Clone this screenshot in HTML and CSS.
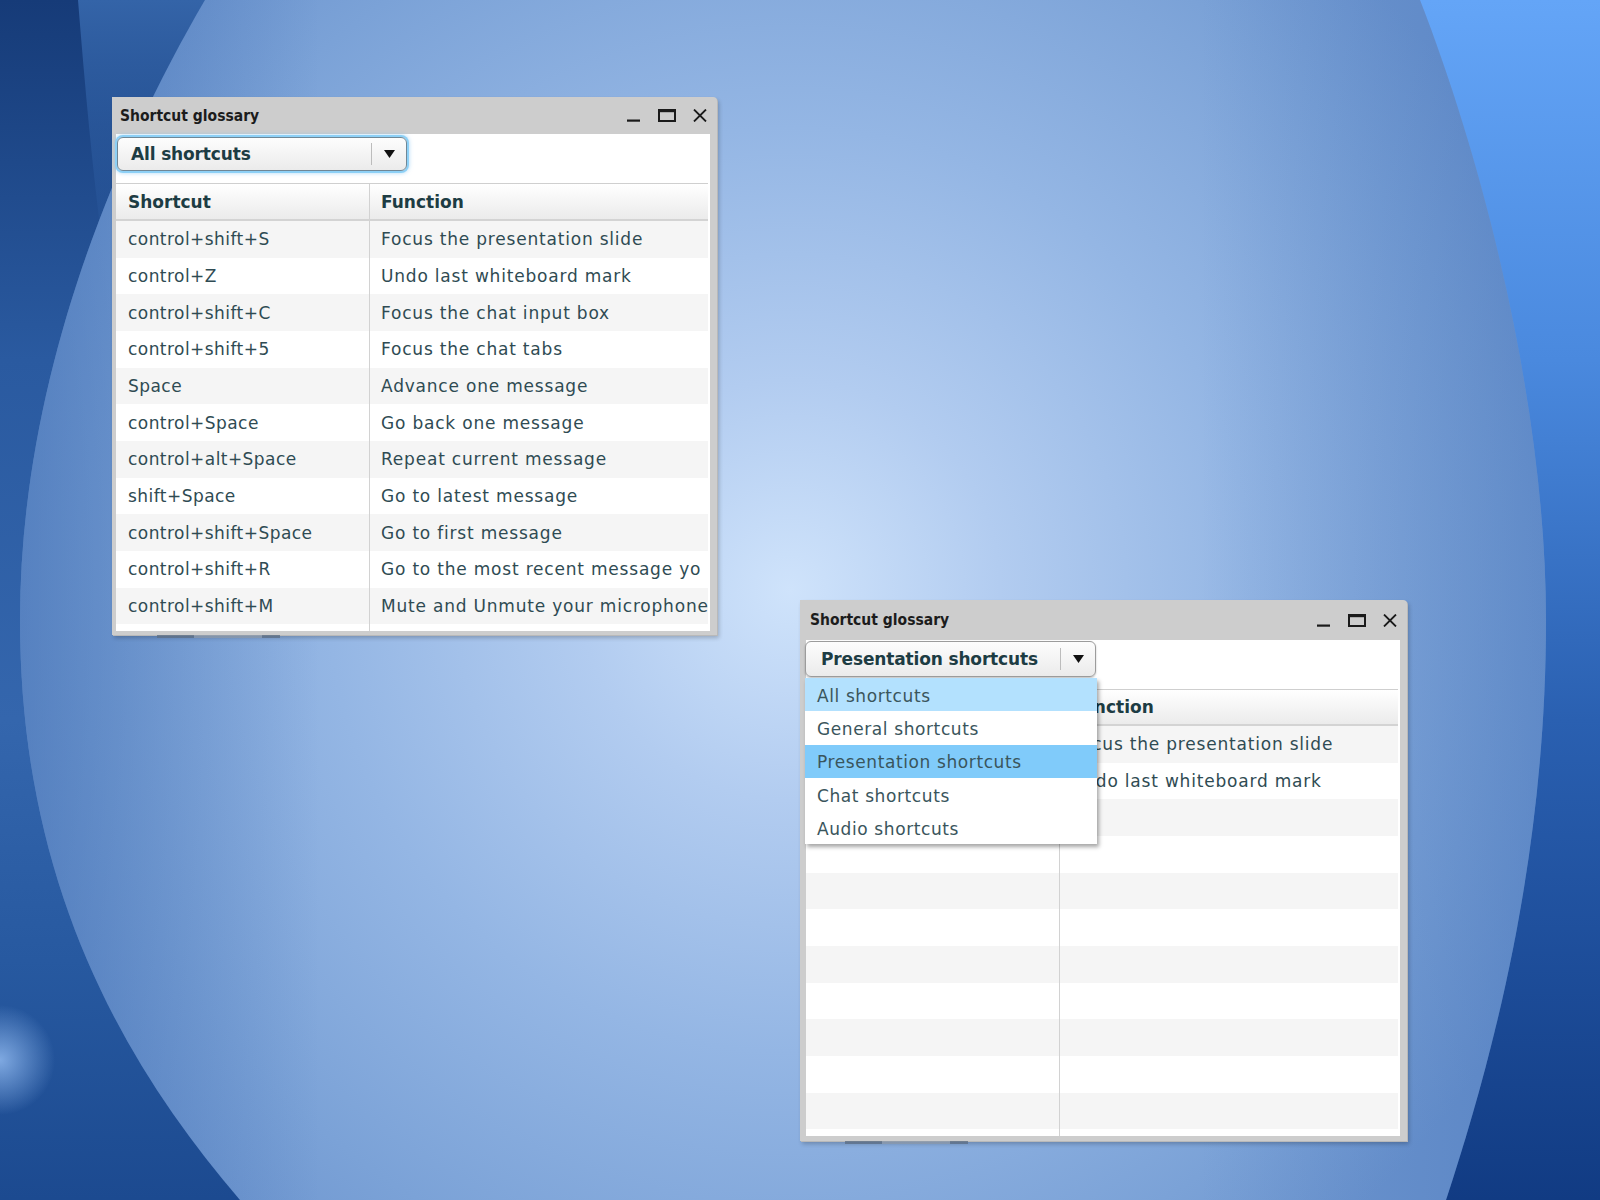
FILE: index.html
```html
<!DOCTYPE html>
<html lang="en">
<head>
<meta charset="utf-8">
<title>Shortcut glossary</title>
<link rel="stylesheet" href="styles.css">
</head>
<body>
<div class="desktop">
  <svg class="wallpaper" width="1600" height="1200" viewBox="0 0 1600 1200" aria-hidden="true">
    <defs>
      <linearGradient id="leftg" x1="0" y1="0" x2="0" y2="1">
        <stop offset="0" stop-color="#163b78"/>
        <stop offset="0.3" stop-color="#2a5aa0"/>
        <stop offset="0.6" stop-color="#3466ad"/>
        <stop offset="0.8" stop-color="#2759a0"/>
        <stop offset="1" stop-color="#1c4a90"/>
      </linearGradient>
      <linearGradient id="rightg" x1="0" y1="0" x2="0" y2="1">
        <stop offset="0" stop-color="#64a5f7"/>
        <stop offset="0.3" stop-color="#4a89de"/>
        <stop offset="0.6" stop-color="#2a60b1"/>
        <stop offset="1" stop-color="#113b83"/>
      </linearGradient>
      <radialGradient id="mid" cx="790" cy="590" r="840" gradientUnits="userSpaceOnUse">
        <stop offset="0" stop-color="#cfe3fb"/>
        <stop offset="0.25" stop-color="#b2ccf0"/>
        <stop offset="0.55" stop-color="#94b6e4"/>
        <stop offset="0.85" stop-color="#7ba2d7"/>
        <stop offset="1" stop-color="#6f97d0"/>
      </radialGradient>
      <linearGradient id="rshade" x1="1200" y1="0" x2="1550" y2="0" gradientUnits="userSpaceOnUse">
        <stop offset="0" stop-color="#3565b0" stop-opacity="0"/>
        <stop offset="1" stop-color="#3565b0" stop-opacity="0.35"/>
      </linearGradient>
      <linearGradient id="lshade" x1="320" y1="0" x2="20" y2="0" gradientUnits="userSpaceOnUse">
        <stop offset="0" stop-color="#2f5fa8" stop-opacity="0"/>
        <stop offset="1" stop-color="#2f5fa8" stop-opacity="0.45"/>
      </linearGradient>
      <linearGradient id="streak" x1="0" y1="0" x2="0" y2="1">
        <stop offset="0" stop-color="#3464a8"/>
        <stop offset="1" stop-color="#2a5aa0" stop-opacity="0"/>
      </linearGradient>
      <radialGradient id="glow" cx="0" cy="1060" r="55" gradientUnits="userSpaceOnUse">
        <stop offset="0" stop-color="#8fb8ee" stop-opacity="0.85"/>
        <stop offset="1" stop-color="#8fb8ee" stop-opacity="0"/>
      </radialGradient>
    </defs>
    <rect x="0" y="0" width="800" height="1200" fill="url(#leftg)"/>
    <rect x="800" y="0" width="800" height="1200" fill="url(#rightg)"/>
    <path d="M78 0 L212 0 C170 90 135 190 110 300 C95 200 86 100 78 0 Z" fill="url(#streak)"/>
    <path d="M205 0 L1420 0 C1490 180 1546 420 1546 620 C1546 860 1492 1060 1446 1200 L240 1200 C120 1060 20 880 20 620 C20 400 100 180 205 0 Z" fill="url(#mid)"/>
    <path d="M205 0 L1420 0 C1490 180 1546 420 1546 620 C1546 860 1492 1060 1446 1200 L240 1200 C120 1060 20 880 20 620 C20 400 100 180 205 0 Z" fill="url(#rshade)"/>
    <path d="M205 0 L1420 0 C1490 180 1546 420 1546 620 C1546 860 1492 1060 1446 1200 L240 1200 C120 1060 20 880 20 620 C20 400 100 180 205 0 Z" fill="url(#lshade)"/>
    <circle cx="0" cy="1060" r="55" fill="url(#glow)"/>
  </svg>

  <section class="window win-a">
    <div class="frame">
      <header class="titlebar">
        <span class="title">Shortcut glossary</span>
        <div class="controls">
          <svg class="ic ic-min" width="13" height="13" viewBox="0 0 13 13"><rect x="0" y="10.5" width="13" height="2.2" fill="#1a1a1a"/></svg>
          <svg class="ic ic-max" width="18" height="13" viewBox="0 0 18 13"><path d="M1 1.5 H17 M1 1 V12 H17 V1" fill="none" stroke="#1a1a1a" stroke-width="2"/><rect x="0" y="0" width="18" height="3.2" fill="#1a1a1a"/></svg>
          <svg class="ic ic-close" width="14" height="13" viewBox="0 0 14 13"><path d="M1 0.5 L13 12.5 M13 0.5 L1 12.5" stroke="#1a1a1a" stroke-width="1.8" fill="none"/></svg>
        </div>
      </header>
      <div class="content">
        <div class="toolbar">
          <div class="select focused">
            <span class="select-label">All shortcuts</span>
            <span class="select-btn"><svg width="11" height="8" viewBox="0 0 11 8"><path d="M0 0 H11 L5.5 8 Z" fill="#111"/></svg></span>
          </div>
        </div>
        <div class="grid">
          <div class="grid-head">
            <div class="cell c1">Shortcut</div>
            <div class="cell c2">Function</div>
          </div>
          <div class="grid-body">
            <div class="row"><div class="cell c1">control+shift+S</div><div class="cell c2">Focus the presentation slide</div></div>
            <div class="row"><div class="cell c1">control+Z</div><div class="cell c2">Undo last whiteboard mark</div></div>
            <div class="row"><div class="cell c1">control+shift+C</div><div class="cell c2">Focus the chat input box</div></div>
            <div class="row"><div class="cell c1">control+shift+5</div><div class="cell c2">Focus the chat tabs</div></div>
            <div class="row"><div class="cell c1">Space</div><div class="cell c2">Advance one message</div></div>
            <div class="row"><div class="cell c1">control+Space</div><div class="cell c2">Go back one message</div></div>
            <div class="row"><div class="cell c1">control+alt+Space</div><div class="cell c2">Repeat current message</div></div>
            <div class="row"><div class="cell c1">shift+Space</div><div class="cell c2">Go to latest message</div></div>
            <div class="row"><div class="cell c1">control+shift+Space</div><div class="cell c2">Go to first message</div></div>
            <div class="row"><div class="cell c1">control+shift+R</div><div class="cell c2">Go to the most recent message yo</div></div>
            <div class="row"><div class="cell c1">control+shift+M</div><div class="cell c2">Mute and Unmute your microphone</div></div>
            <div class="row"><div class="cell c1"></div><div class="cell c2"></div></div>
          </div>
        </div>
      </div>
    </div>
    <div class="foot"></div>
  </section>

  <section class="window win-b">
    <div class="frame">
      <header class="titlebar">
        <span class="title">Shortcut glossary</span>
        <div class="controls">
          <svg class="ic ic-min" width="13" height="13" viewBox="0 0 13 13"><rect x="0" y="10.5" width="13" height="2.2" fill="#1a1a1a"/></svg>
          <svg class="ic ic-max" width="18" height="13" viewBox="0 0 18 13"><path d="M1 1.5 H17 M1 1 V12 H17 V1" fill="none" stroke="#1a1a1a" stroke-width="2"/><rect x="0" y="0" width="18" height="3.2" fill="#1a1a1a"/></svg>
          <svg class="ic ic-close" width="14" height="13" viewBox="0 0 14 13"><path d="M1 0.5 L13 12.5 M13 0.5 L1 12.5" stroke="#1a1a1a" stroke-width="1.8" fill="none"/></svg>
        </div>
      </header>
      <div class="content">
        <div class="toolbar">
          <div class="select open">
            <span class="select-label">Presentation shortcuts</span>
            <span class="select-btn"><svg width="11" height="8" viewBox="0 0 11 8"><path d="M0 0 H11 L5.5 8 Z" fill="#111"/></svg></span>
            <ul class="list">
              <li class="list-item item-hover">All shortcuts</li>
              <li class="list-item">General shortcuts</li>
              <li class="list-item item-selected">Presentation shortcuts</li>
              <li class="list-item">Chat shortcuts</li>
              <li class="list-item">Audio shortcuts</li>
            </ul>
          </div>
        </div>
        <div class="grid">
          <div class="grid-head">
            <div class="cell c1"></div>
            <div class="cell c2">Function</div>
          </div>
          <div class="grid-body">
            <div class="row"><div class="cell c1"></div><div class="cell c2">Focus the presentation slide</div></div>
            <div class="row"><div class="cell c1"></div><div class="cell c2">Undo last whiteboard mark</div></div>
            <div class="row"><div class="cell c1"></div><div class="cell c2"></div></div>
            <div class="row"><div class="cell c1"></div><div class="cell c2"></div></div>
            <div class="row"><div class="cell c1"></div><div class="cell c2"></div></div>
            <div class="row"><div class="cell c1"></div><div class="cell c2"></div></div>
            <div class="row"><div class="cell c1"></div><div class="cell c2"></div></div>
            <div class="row"><div class="cell c1"></div><div class="cell c2"></div></div>
            <div class="row"><div class="cell c1"></div><div class="cell c2"></div></div>
            <div class="row"><div class="cell c1"></div><div class="cell c2"></div></div>
            <div class="row"><div class="cell c1"></div><div class="cell c2"></div></div>
            <div class="row"><div class="cell c1"></div><div class="cell c2"></div></div>
          </div>
        </div>
      </div>
    </div>
    <div class="foot"></div>
  </section>
</div>
</body>
</html>
```

FILE: styles.css
```css
html, body {
  margin: 0;
  padding: 0;
}

body {
  width: 1600px;
  height: 1200px;
  overflow: hidden;
  font-family: "DejaVu Sans", "Liberation Sans", sans-serif;
}

.desktop {
  position: relative;
  width: 1600px;
  height: 1200px;
  overflow: hidden;
}

.wallpaper {
  position: absolute;
  left: 0;
  top: 0;
  display: block;
}

/* ---------- window ---------- */
.window {
  position: absolute;
  display: flex;
  flex-direction: column;
}

.win-a {
  left: 112px;
  top: 97px;
  width: 605px;
}

.win-b {
  left: 800px;
  top: 600px;
  width: 607px;
}

.frame {
  background: #cdcdcd;
  border-radius: 0 4px 0 0;
  box-shadow: 1px 1px 0 #b9b9b9, 2px 3px 4px rgba(0, 0, 0, 0.22);
  padding-bottom: 4px;
}

.win-b .frame {
  padding-bottom: 5px;
}

.titlebar {
  height: 37px;
  display: flex;
  align-items: center;
  justify-content: space-between;
  padding: 0 10px 0 8px;
  box-sizing: border-box;
}

.win-b .titlebar {
  height: 40px;
  padding-left: 10px;
}

.title {
  font-family: "DejaVu Sans Condensed", "DejaVu Sans", sans-serif;
  font-stretch: condensed;
  font-weight: bold;
  font-size: 15.5px;
  color: #1c1c1c;
}

.controls {
  display: flex;
  align-items: center;
  gap: 18px;
}

.ic {
  display: block;
}

.ic-max {
  margin-right: -1px;
}

.content {
  margin: 0 7px 0 4px;
  background: #ffffff;
}

.win-b .content {
  margin-left: 6px;
}

/* ---------- dropdown ---------- */
.toolbar {
  height: 49px;
  padding-top: 3px;
  box-sizing: border-box;
  position: relative;
  z-index: 2;
}

.win-b .toolbar {
  height: 49px;
  padding-top: 1px;
}

.select {
  position: relative;
  width: 290px;
  height: 34px;
  box-sizing: border-box;
  border: 1px solid #9c9c9c;
  border-radius: 6px;
  background: linear-gradient(#fdfdfd, #ebebeb);
  display: flex;
  align-items: center;
  box-shadow: 0 1px 2px rgba(0, 0, 0, 0.25);
}

.select.focused {
  margin-left: 1px;
  border-color: #6f8796;
  box-shadow: 0 0 0 2px #8dd0f6, 0 0 4px 2px rgba(110, 185, 240, 0.55);
}

.select.open {
  margin-left: -1px;
  width: 291px;
  height: 36px;
}

.select-label {
  flex: 1;
  padding-left: 13px;
  font-weight: bold;
  font-size: 17px;
  letter-spacing: -0.15px;
  color: #1d3c43;
  white-space: nowrap;
}

.open .select-label {
  padding-left: 15px;
}

.select-btn {
  width: 34px;
  height: 22px;
  border-left: 1px solid #bcbcbc;
  display: flex;
  align-items: center;
  justify-content: center;
}

.list {
  position: absolute;
  top: 100%;
  left: -1px;
  width: 292px;
  margin: 2px 0 0 0;
  padding: 0;
  list-style: none;
  background: #ffffff;
  box-shadow: 2px 3px 4px rgba(0, 0, 0, 0.35);
}

.list-item {
  height: 33.3px;
  box-sizing: border-box;
  padding: 2px 0 0 12px;
  display: flex;
  align-items: center;
  font-size: 17px;
  letter-spacing: 0.6px;
  color: #3a555c;
  white-space: nowrap;
}

.item-hover {
  background: #b3e1fe;
}

.item-selected {
  background: #80cbfa;
}

/* ---------- grid ---------- */
.grid {
  border-top: 1px solid #cfcfcf;
  margin-right: 2px;
}

.grid-head {
  display: flex;
  height: 37px;
  box-sizing: border-box;
  background: linear-gradient(#ffffff, #ebebeb);
  border-bottom: 2px solid #d3d3d3;
}

.win-b .grid-head {
  height: 36px;
}

.grid-head .cell {
  font-weight: bold;
  font-size: 17px;
  color: #1d3c43;
}

.cell {
  display: flex;
  align-items: center;
  white-space: nowrap;
  overflow: hidden;
  box-sizing: border-box;
}

.c1 {
  width: 254px;
  flex: none;
  padding-left: 12px;
  border-right: 1px solid #d2d2d2;
}

.c2 {
  flex: 1;
  min-width: 0;
  padding-left: 11px;
}

.grid-body {
  height: 410px;
  overflow: hidden;
  background: linear-gradient(to right, transparent 253px, #d2d2d2 253px, #d2d2d2 254px, transparent 254px), #f5f5f5;
}

.win-b .grid-body {
  height: 410px;
}

.row {
  display: flex;
  height: 36.67px;
}

.row:nth-child(even) {
  background: #ffffff;
}

.row .cell {
  font-size: 17px;
  color: #2f4b53;
}

.row .c1 {
  letter-spacing: 0.45px;
}

.row .c2 {
  letter-spacing: 0.8px;
}

.foot {
  height: 3px;
  width: 123px;
  margin-left: 45px;
  background: linear-gradient(to right, #5d6f86 0, #5d6f86 30%, #8a98aa 30%, #8a98aa 85%, #5d6f86 85%);
  opacity: 0.8;
}
```
